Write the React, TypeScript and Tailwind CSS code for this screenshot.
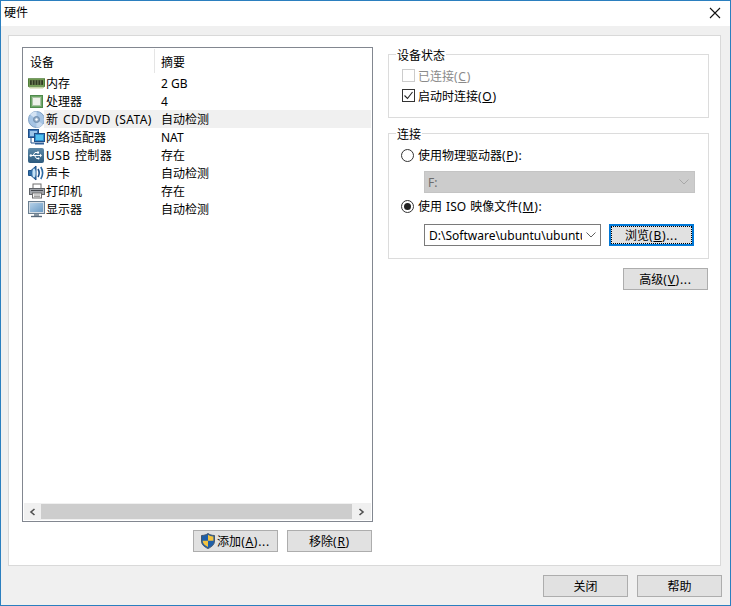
import React from 'react';

const FONT = 'font-["Noto_Sans","Noto_Sans_CJK_SC",sans-serif]';

const IconRam = () => (
  <svg width="17" height="11" viewBox="0 0 18 11">
    <rect x="0.5" y="0.5" width="17" height="8" fill="#7aa35a" stroke="#4c7a36" />
    <rect x="2" y="2" width="14" height="5" fill="#2f3b22" />
    <path d="M4.5 2v5M7.5 2v5M10.5 2v5M13.5 2v5" stroke="#7f8f66" />
    <path d="M1 9.5h16" stroke="#a9bf80" />
    <path d="M2 10.5h14" stroke="#d2dcb8" />
  </svg>
);

const IconCpu = () => (
  <svg width="13" height="13" viewBox="0 0 13 13">
    <rect x="0.5" y="0.5" width="12" height="12" fill="#6fa868" stroke="#4f8a4c" />
    <rect x="2.5" y="2.5" width="8" height="8" fill="#eef1ea" stroke="#a9c2a4" />
  </svg>
);

const IconDisc = () => (
  <svg width="17" height="17" viewBox="0 0 17 17">
    <circle cx="8.5" cy="8.5" r="8" fill="#a6c4e4" stroke="#7e9fc4" />
    <path d="M8.5 8.5L2 3.5A8 8 0 0 1 8.5 .5z" fill="#d4e3f3" />
    <path d="M8.5 8.5L15 13.5A8 8 0 0 1 8.5 16.5z" fill="#c6d9ee" />
    <circle cx="8.5" cy="8.5" r="3" fill="#8ea9c6" stroke="#6f8cab" />
    <circle cx="8.5" cy="8.5" r="1.2" fill="#ffffff" />
  </svg>
);

const IconNetwork = () => (
  <svg width="17" height="16" viewBox="0 0 17 16">
    <rect x="0.5" y="0.5" width="10" height="8" fill="#3f78b8" stroke="#1f4f88" />
    <rect x="2" y="2" width="7" height="5" fill="#9cc6ea" />
    <path d="M3 9v5h4" stroke="#1f4f88" fill="none" />
    <rect x="6.5" y="4.5" width="10" height="8" fill="#2f8fcf" stroke="#1f4f88" />
    <rect x="8" y="6" width="7" height="5" fill="#53c0ee" />
    <path d="M7 14.5h9" stroke="#2f5f98" strokeWidth="2" />
  </svg>
);

const IconUsb = () => (
  <svg width="16" height="15" viewBox="0 0 16 15">
    <defs>
      <linearGradient id="usb" x1="0" y1="0" x2="0" y2="1">
        <stop offset="0" stopColor="#5f8aa8" />
        <stop offset="1" stopColor="#2c5a7e" />
      </linearGradient>
    </defs>
    <rect x="0" y="0" width="16" height="15" rx="2" fill="url(#usb)" />
    <path d="M2.5 7.5h10M5 7.5l2-3h2M6.5 7.5l2 3h1.5" stroke="#ffffff" fill="none" />
    <path d="M12 5.7l2 1.8-2 1.8z" fill="#ffffff" />
    <circle cx="2.8" cy="7.5" r="1.2" fill="#ffffff" />
    <rect x="9" y="3.5" width="2" height="2" fill="#ffffff" />
    <circle cx="10.5" cy="10.5" r="1" fill="#ffffff" />
  </svg>
);

const IconSound = () => (
  <svg width="16" height="16" viewBox="0 0 16 16">
    <path d="M0.5 5.5h2.5L8 1v14L3 10.5H0.5z" fill="#2f6ea8" stroke="#1c4f86" />
    <ellipse cx="6" cy="8" rx="1.6" ry="4.5" fill="#c4e2f6" />
    <path d="M10 4c1.4 2.4 1.4 5.6 0 8" stroke="#1c4f86" strokeWidth="1.6" fill="none" />
    <path d="M12.8 2c2.2 3.6 2.2 8.4 0 12" stroke="#2c6aa4" strokeWidth="1.6" fill="none" />
  </svg>
);

const IconPrinter = () => (
  <svg width="16" height="16" viewBox="0 0 16 16">
    <rect x="4" y="1" width="8" height="5" fill="#ffffff" stroke="#6f6f6f" />
    <rect x="0.5" y="5.5" width="15" height="6" fill="#a0a4aa" stroke="#5f6368" />
    <rect x="2" y="7" width="12" height="1" fill="#43474c" />
    <rect x="3.5" y="10" width="9" height="5" fill="#f4f4f4" stroke="#6f6f6f" />
    <path d="M5 12h6M5 13.5h6" stroke="#a0a0a0" />
  </svg>
);

const IconMonitor = () => (
  <svg width="17" height="17" viewBox="0 0 17 17">
    <defs>
      <linearGradient id="screen" x1="0" y1="0" x2="1" y2="1">
        <stop offset="0" stopColor="#b4d0e8" />
        <stop offset="1" stopColor="#6a9ac4" />
      </linearGradient>
    </defs>
    <rect x="0.5" y="0.5" width="16" height="12" fill="#d4dde5" stroke="#6a7e90" />
    <rect x="2" y="2" width="13" height="9" fill="url(#screen)" />
    <path d="M6 13h5v2H6z" fill="#8a98a4" />
    <path d="M3 15.5h11" stroke="#56687a" strokeWidth="1.4" />
  </svg>
);

const IconShield = () => (
  <svg width="14" height="16" viewBox="0 0 14 16">
    <path d="M7 0.5c1.8 1.3 3.6 1.9 6.5 2v5.6c0 3.4-2.7 5.8-6.5 7.4C3.2 13.9 .5 11.5 .5 8.1V2.5c2.9-.1 4.7-.7 6.5-2z" fill="#1f5fa8" stroke="#46576a" />
    <path d="M7 1.8v6H12.4V3.5C10.4 3.3 8.6 2.8 7 1.8zM7 7.8H1.6c.1 2.8 2.4 4.8 5.4 6.2z" fill="#f4c33f" />
  </svg>
);

const rows: { icon: React.ReactNode; name: string; summary: string; selected?: boolean; wide?: boolean }[] = [
  { icon: <IconRam />, name: '内存', summary: '2 GB' },
  { icon: <span className="block pl-[2px]"><IconCpu /></span>, name: '处理器', summary: '4' },
  { icon: <IconDisc />, name: '新 CD/DVD (SATA)', summary: '自动检测', selected: true, wide: true },
  { icon: <IconNetwork />, name: '网络适配器', summary: 'NAT' },
  { icon: <IconUsb />, name: 'USB 控制器', summary: '存在', wide: true },
  { icon: <IconSound />, name: '声卡', summary: '自动检测' },
  { icon: <span className="block pl-px"><IconPrinter /></span>, name: '打印机', summary: '存在' },
  { icon: <IconMonitor />, name: '显示器', summary: '自动检测' },
];

const Chevron: React.FC<{ color: string }> = ({ color }) => (
  <svg width="10" height="6" viewBox="0 0 10 6">
    <path d="M0.5 0.5L5 5l4.5-4.5" stroke={color} fill="none" />
  </svg>
);

const Button: React.FC<{ children: React.ReactNode; className?: string }> = ({ children, className }) => (
  <button className={`w-[85px] h-[22px] flex items-center justify-center bg-[#e1e1e1] border border-[#adadad] text-[12px] text-black ${className ?? ''}`}>
    {children}
  </button>
);

// mnemonic like (A)... with the letter underlined
const Mn: React.FC<{ c: string; after?: string }> = ({ c, after }) => (
  <span className="tracking-[0.7px]">(<span className="underline">{c}</span>){after}</span>
);

const Group: React.FC<{ title: string; className: string; children: React.ReactNode }> = ({ title, className, children }) => (
  <fieldset className={`relative w-[321px] border border-[#dcdcdc] ${className}`}>
    <span className="absolute left-[7px] top-[-7px] bg-white px-px leading-[16px]">{title}</span>
    {children}
  </fieldset>
);

export default function App() {
  return (
    <div className={`w-[731px] h-[606px] flex flex-col overflow-hidden bg-[#f0f0f0] border border-[#2b7fbf] text-[12px] text-black ${FONT}`}>
      {/* Title bar */}
      <div className="h-[25px] shrink-0 bg-white flex items-center justify-between pl-[3px] pr-[9px] pb-[2px]">
        <span>硬件</span>
        <svg width="12" height="12" viewBox="0 0 12 12">
          <path d="M1 1l10 10M11 1L1 11" stroke="#111" strokeWidth="1.1" />
        </svg>
      </div>

      {/* Main panel */}
      <div className="ml-[7px] mt-[9px] w-[713px] h-[531px] shrink-0 bg-white border border-[#d9d9d9] flex pl-[13px] pt-[11px]">
        <div className="w-[351px] flex flex-col">
          <div className="h-[475px] flex flex-col border border-[#828790]">
            <div className="flex h-[26px] items-center">
              <div className="w-[131px] pl-[7px] pt-[4px]">设备</div>
              <div className="h-[24px] border-l border-[#e5e5e5] pl-[6px] leading-[28px]">摘要</div>
            </div>
            <div className="flex-1">
              {rows.map((r) => (
                <div key={r.name} className="flex h-[18px] items-center">
                  <div className="w-[21px] h-[18px] flex items-center shrink-0 pl-[5px] [&>*]:shrink-0">{r.icon}</div>
                  <div className={`flex flex-1 h-[18px] mr-px leading-[19px] ${r.selected ? 'bg-[#f0f0f0]' : ''}`}>
                    <span className={`w-[117px] pl-[2px] whitespace-nowrap ${r.wide ? 'tracking-[0.4px] [word-spacing:1px]' : ''}`}>{r.name}</span>
                    <span>{r.summary}</span>
                  </div>
                </div>
              ))}
            </div>
            {/* Horizontal scrollbar */}
            <div className="flex h-[17px] mx-px mb-px bg-[#f0f0f0] items-center">
              <div className="w-[17px] flex justify-center">
                <svg width="7" height="8" viewBox="0 0 7 8"><path d="M5.5 1L2 4l3.5 3" stroke="#505050" strokeWidth="1.6" fill="none" /></svg>
              </div>
              <div className="w-[311px] h-[15px] bg-[#cdcdcd]" />
              <div className="flex-1 flex justify-center">
                <svg width="7" height="8" viewBox="0 0 7 8"><path d="M1.5 1L5 4 1.5 7" stroke="#505050" strokeWidth="1.6" fill="none" /></svg>
              </div>
            </div>
          </div>
          <div className="flex justify-end gap-[9px] mt-[8px] mr-px">
            <Button>
              <IconShield />
              <span className="ml-[2px] pt-[2px]">添加<Mn c="A" after="..." /></span>
            </Button>
            <Button><span className="pt-[2px]">移除<Mn c="R" /></span></Button>
          </div>
        </div>

        <div className="ml-[15px] w-[321px] pt-[7px] flex flex-col">
          <Group title="设备状态" className="h-[64px] mb-[15px]">
            <div className="pl-[13px] pt-[11px] flex flex-col gap-[2px]">
              <label className="flex items-center h-[18px] text-[#8a8a8a]">
                <span className="w-[13px] h-[13px] border border-[#cccccc] mr-[3px]" />
                <span className="pt-[4px]">已连接<Mn c="C" /></span>
              </label>
              <label className="flex items-center h-[18px]">
                <span className="w-[13px] h-[13px] border border-[#333333] mr-[3px] flex items-center justify-center">
                  <svg width="11" height="11" viewBox="0 0 11 11"><path d="M1.5 5.5l3 3 5-6.5" stroke="#222" strokeWidth="1.1" fill="none" /></svg>
                </span>
                <span className="pt-[4px]">启动时连接<Mn c="O" /></span>
              </label>
            </div>
          </Group>

          <Group title="连接" className="h-[126px] mb-[9px]">
            <div className="pl-[12px] pt-[12px]">
              <label className="flex items-center h-[18px]">
                <span className="w-[13px] h-[13px] rounded-full border border-[#333333] mr-[4px]" />
                <span className="pt-[2px]">使用物理驱动器<Mn c="P" after=":" /></span>
              </label>
              <div className="ml-[23px] mt-[7px] w-[271px] h-[22px] bg-[#cccccc] border border-[#c4c4c4] flex items-center justify-between pl-[3px] pr-[5px] text-[#6d6d6d]">
                <span className="pt-[2px]">F:</span>
                <Chevron color="#a8a8a8" />
              </div>
              <label className="flex items-center h-[18px] mt-[4px]">
                <span className="w-[13px] h-[13px] rounded-full border border-[#333333] mr-[4px] flex items-center justify-center">
                  <span className="w-[7px] h-[7px] rounded-full bg-[#222222]" />
                </span>
                <span className="pt-[2px] [word-spacing:1px]">使用 ISO 映像文件<Mn c="M" after=":" /></span>
              </label>
              <div className="flex mt-[9px] ml-[23px]">
                <div className="w-[177px] h-[22px] bg-white border border-[#7a7a7a] flex items-center pl-[4px] pr-[4px]">
                  <span className="w-[153px] pt-[2px] overflow-hidden whitespace-nowrap">D:\Software\ubuntu\ubuntu-16.04</span>
                  <span className="ml-auto"><Chevron color="#606060" /></span>
                </div>
                <button className="ml-[8px] w-[85px] h-[22px] bg-[#e1e1e1] border-2 border-[#0078d7] flex items-center justify-center">
                  <span className="w-[79px] h-[16px] leading-[18px] outline-1 outline-dotted outline-black text-center">浏览<Mn c="B" after="..." /></span>
                </button>
              </div>
            </div>
          </Group>

          <div className="flex justify-end mr-px">
            <Button><span className="pt-[2px]">高级<Mn c="V" after="..." /></span></Button>
          </div>
        </div>
      </div>

      {/* Footer */}
      <div className="flex justify-end gap-[9px] mt-[9px] pr-[8px]">
        <Button><span className="pt-[2px]">关闭</span></Button>
        <Button><span className="pt-[2px]">帮助</span></Button>
      </div>
    </div>
  );
}
